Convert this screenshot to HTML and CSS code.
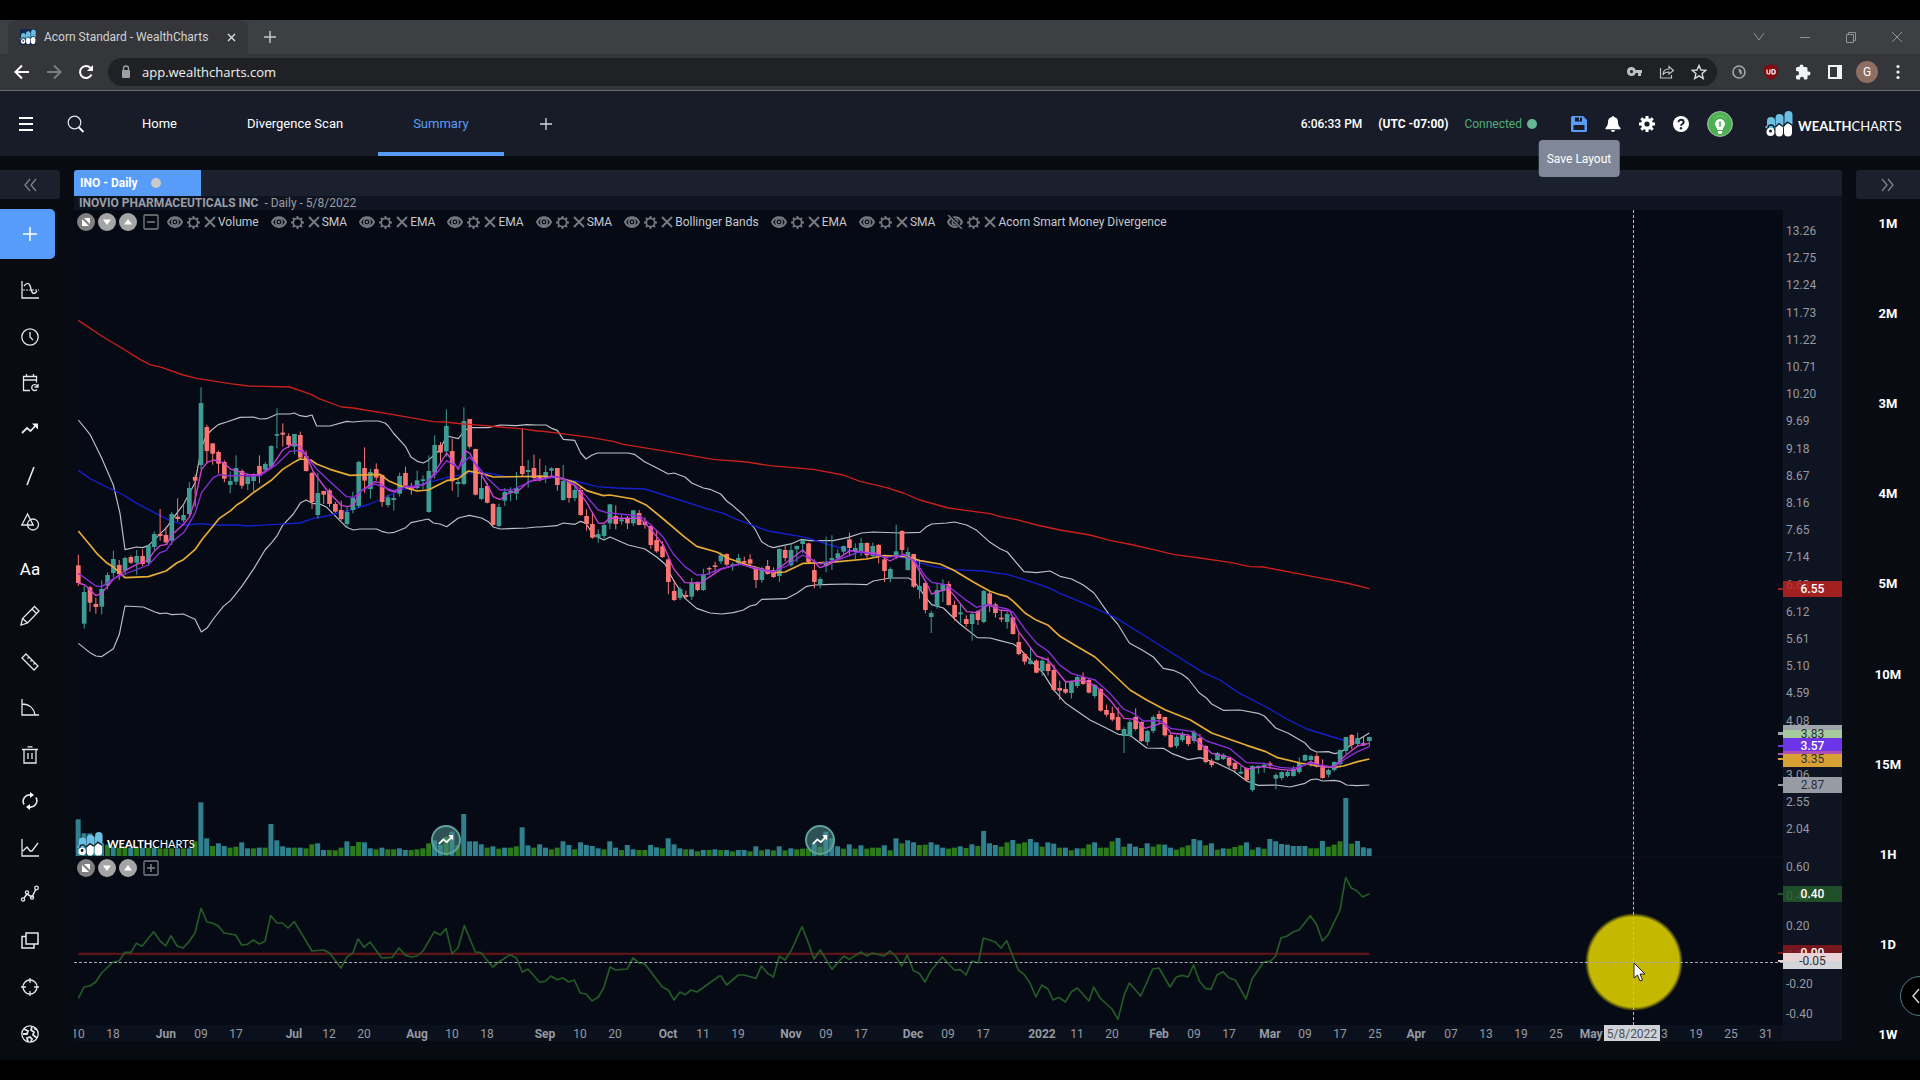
FILE: index.html
```html
<!DOCTYPE html>
<html lang="en">
<head>
<meta charset="utf-8">
<title>Acorn Standard - WealthCharts</title>
<link rel="stylesheet" href="styles.css">
</head>
<body>
<svg class="sprite" aria-hidden="true">
  <symbol id="logo" viewBox="0 0 28 26">
    <g fill="#6bbfe3"><rect x="2" y="6" width="8" height="13" rx="4"/><rect x="10.500" y="3" width="8" height="16" rx="4"/><rect x="19.500" y="0" width="8" height="16" rx="4"/><circle cx="1.500" cy="16" r="1.200"/></g>
    <g fill="#fff"><circle cx="5.500" cy="21" r="4"/><rect x="10.500" y="14" width="7.500" height="11.500" rx="3.700"/><rect x="19" y="13" width="8" height="12.500" rx="4"/></g>
    <path d="M3 17a3 3 0 0 1 6 0M10.500 16l3.500-3.500 4 3M18.500 15l4-4 4.500 3" fill="none" stroke="#10151f" stroke-width="1.300"/>
    <circle cx="5.500" cy="20" r="1.500" fill="#10151f"/>
  </symbol>
  <symbol id="eye" viewBox="0 0 16 14"><path d="M1 7c3-6.500 11-6.500 14 0-3 6.500-11 6.500-14 0z" fill="none" stroke="currentColor" stroke-width="2"/><circle cx="8" cy="7" r="3.200" fill="none" stroke="currentColor" stroke-width="1.500"/><circle cx="8" cy="7" r="1.200" fill="currentColor"/></symbol>
  <symbol id="eye-off" viewBox="0 0 16 14"><path d="M1 7c3-6.500 11-6.500 14 0-3 6.500-11 6.500-14 0z" fill="none" stroke="currentColor" stroke-width="2"/><circle cx="8" cy="7" r="2.800" fill="none" stroke="currentColor" stroke-width="1.500"/><path d="M2 0l13 14" stroke="#050a15" stroke-width="3"/><path d="M1 0l14 14" stroke="currentColor" stroke-width="1.500"/></symbol>
  <symbol id="cog" viewBox="0 0 14 14"><circle cx="7" cy="7" r="4.500" fill="none" stroke="currentColor" stroke-width="1.800"/><path d="M7 0v3M7 11v3M0 7h3M11 7h3M2 2l2 2M10 10l2 2M12 2l-2 2M4 10l-2 2" stroke="currentColor" stroke-width="2"/></symbol>
  <symbol id="cross" viewBox="0 0 12 12"><path d="M1 1l10 10M11 1L1 11" stroke="currentColor" stroke-width="2"/></symbol>
  <symbol id="trend" viewBox="0 0 18 12"><path d="M1 11l5-5 4 3 5.500-6" fill="none" stroke="currentColor" stroke-width="2"/><path d="M11.500 1H17v6z" fill="currentColor"/></symbol>
</svg>

<header class="browser">
  <div class="tabstrip">
    <div class="tab">
      <svg class="favicon"><use href="#logo"/></svg>
      <span class="tab-title">Acorn Standard - WealthCharts</span>
      <button class="icon-btn" aria-label="Close tab"><svg width="9" height="9" viewBox="0 0 9 9"><path d="M1 1l7 7M8 1L1 8" stroke="#dadce0" stroke-width="1.400"/></svg></button>
    </div>
    <button class="icon-btn new-tab" aria-label="New tab"><svg width="12" height="12" viewBox="0 0 12 12"><path d="M6 0v12M0 6h12" stroke="#c4c7ca" stroke-width="1.500"/></svg></button>
    <div class="window-controls">
      <button class="icon-btn" aria-label="Search tabs"><svg width="12" height="12" viewBox="0 0 12 12"><path d="M1 2l5 7 5-7" fill="none" stroke="#909396"/></svg></button>
      <button class="icon-btn" aria-label="Minimize"><svg width="12" height="12" viewBox="0 0 12 12"><path d="M1 6.500h10" stroke="#909396"/></svg></button>
      <button class="icon-btn" aria-label="Restore"><svg width="12" height="12" viewBox="0 0 12 12"><path d="M1.500 3.500h7v8h-7zM3.500 3V1.500h7v8H9" fill="none" stroke="#909396"/></svg></button>
      <button class="icon-btn" aria-label="Close window"><svg width="12" height="12" viewBox="0 0 12 12"><path d="M1 1l10 10M11 1L1 11" stroke="#909396"/></svg></button>
    </div>
  </div>
  <div class="toolbar">
    <button class="icon-btn nav-btn" aria-label="Back"><svg width="16" height="16" viewBox="0 0 16 16"><path d="M15 8H2M8 1.500L1.500 8 8 14.500" fill="none" stroke="#fff" stroke-width="2"/></svg></button>
    <button class="icon-btn nav-btn" aria-label="Forward"><svg width="16" height="16" viewBox="0 0 16 16"><path d="M1 8h13M8 1.500L14.500 8 8 14.500" fill="none" stroke="#7b7d80" stroke-width="2"/></svg></button>
    <button class="icon-btn nav-btn" aria-label="Reload"><svg width="16" height="16" viewBox="0 0 16 16"><path d="M13.500 10.500A6 6 0 1 1 12.500 4" fill="none" stroke="#fff" stroke-width="2"/><path d="M15 1v6H9z" fill="#fff"/></svg></button>
    <div class="omnibox">
      <svg width="10" height="14" viewBox="0 0 10 14"><rect x="1" y="5" width="8" height="8" rx="1" fill="#9aa0a6"/><path d="M2.500 5V3.500a2.500 2.500 0 0 1 5 0V5" fill="none" stroke="#9aa0a6" stroke-width="1.300"/></svg>
      <input class="url" type="text" value="app.wealthcharts.com" aria-label="Address">
      <button class="icon-btn" aria-label="Passwords"><svg width="16" height="10" viewBox="0 0 16 10"><path fill-rule="evenodd" fill="#bdc1c6" d="M4.500 0a4.500 4.500 0 1 0 4.300 6H11v3h3V6h1V3H8.700A4.500 4.500 0 0 0 4.500 0zm0 3a1.600 1.600 0 1 1 0 3.200 1.600 1.600 0 0 1 0-3.200z"/></svg></button>
      <button class="icon-btn" aria-label="Share"><svg width="16" height="14" viewBox="0 0 16 14"><path d="M1.500 3v10h11v-3M4 10c0-4 2-6 6-6V1.500L14.500 5.500 10 9V7C7 7 5 8 4 10z" fill="none" stroke="#bdc1c6" stroke-width="1.200"/></svg></button>
      <button class="icon-btn" aria-label="Bookmark"><svg width="16" height="16" viewBox="0 0 16 16"><path d="M8 1.500l2 4.500 4.700.4-3.600 3.200 1.100 4.800L8 11.800l-4.200 2.600 1.100-4.800L1.300 6.400 6 6z" fill="none" stroke="#dadce0" stroke-width="1.400"/></svg></button>
    </div>
    <div class="extensions">
      <button class="icon-btn" aria-label="Timer"><svg width="16" height="16" viewBox="0 0 16 16"><circle cx="8" cy="8" r="6" fill="none" stroke="#a4a6a9" stroke-width="1.600"/><path d="M7.500 4.500A4 4 0 0 1 10 11L8 8z" fill="#a4a6a9"/></svg></button>
      <button class="icon-btn shield" aria-label="uBlock"><svg width="16" height="16" viewBox="0 0 16 16"><path d="M8 0c2 1.500 4 2 7 2v5c0 4-3 7-7 9-4-2-7-5-7-9V2c3 0 5-.5 7-2z" fill="#800b0f"/><path d="M4 5.500v3a1.500 1.500 0 0 0 3 0v-3M9 5.500v4.500h1a2.200 2.200 0 0 0 0-4.500z" fill="none" stroke="#fff" stroke-width="1.200"/></svg></button>
      <button class="icon-btn" aria-label="Extensions"><svg width="16" height="16" viewBox="0 0 16 16"><path d="M13.500 7.500h-1V4.500A1.500 1.500 0 0 0 11 3H8.500V2.500a2 2 0 0 0-4 0V3H2.500A1.500 1.500 0 0 0 1 4.500V7h.8a2 2 0 0 1 0 4.500H1V14a1.500 1.500 0 0 0 1.500 1.500H5v-.8a2 2 0 0 1 4 0v.8h2a1.500 1.500 0 0 0 1.500-1.500v-2.500h1a2 2 0 0 0 0-4z" fill="#f1f3f4"/></svg></button>
      <button class="icon-btn" aria-label="Side panel"><svg width="16" height="16" viewBox="0 0 16 16"><path fill-rule="evenodd" fill="#f1f3f4" d="M1 1h14v14H1zM3 3v10h7V3z"/></svg></button>
      <button class="icon-btn profile" aria-label="Profile">G</button>
      <button class="icon-btn" aria-label="Menu"><svg width="4" height="16" viewBox="0 0 4 16"><g fill="#f1f3f4"><circle cx="2" cy="2.500" r="1.600"/><circle cx="2" cy="8" r="1.600"/><circle cx="2" cy="13.500" r="1.600"/></g></svg></button>
    </div>
  </div>
</header>

<nav class="app-header">
  <button class="icon-btn menu-btn" aria-label="Menu"><svg width="14" height="14" viewBox="0 0 14 14"><path d="M0 1h14M0 7h14M0 13h14" stroke="#fff" stroke-width="2"/></svg></button>
  <button class="icon-btn search-btn" aria-label="Search"><svg width="18" height="18" viewBox="0 0 18 18"><circle cx="7.500" cy="7.500" r="6.300" fill="none" stroke="#e6e8ec" stroke-width="1.200"/><path d="M12 12.500l4.500 4.500" stroke="#fff" stroke-width="1.800"/></svg></button>
  <a class="page-link" href="#home">Home</a>
  <a class="page-link" href="#divergence">Divergence Scan</a>
  <a class="page-link active" href="#summary">Summary</a>
  <button class="icon-btn add-page" aria-label="Add page"><svg width="12" height="12" viewBox="0 0 12 12"><path d="M6 0v12M0 6h12" stroke="#d5d8de" stroke-width="1.300"/></svg></button>
  <div class="status">
    <span class="clock">6:06:33 PM</span>
    <span class="zone">(UTC -07:00)</span>
    <span class="connected">Connected</span>
  </div>
  <div class="actions">
    <div class="save-wrap">
      <button class="icon-btn" aria-label="Save Layout" aria-describedby="save-tip"><svg width="16" height="16" viewBox="0 0 16 16"><path fill="#5b9cf8" fill-rule="evenodd" d="M1.500 0H12l4 4v10.500a1.500 1.500 0 0 1-1.500 1.500h-13A1.500 1.500 0 0 1 0 14.500v-13A1.500 1.500 0 0 1 1.500 0zM4 1.500v4h7v-4H9v3H8v-3zM2.500 9v5h11V9z"/></svg></button>
      <span class="tooltip" id="save-tip" role="tooltip">Save Layout</span>
    </div>
    <button class="icon-btn" aria-label="Alerts"><svg width="16" height="16" viewBox="0 0 16 16"><path fill="#fff" d="M8 0a1 1 0 0 1 1 1c3 .6 4 2.600 4 5 0 3 1 4.500 2.500 6v1.200H.5V12C2 10.500 3 9 3 6c0-2.400 1-4.400 4-5a1 1 0 0 1 1-1zM6 14h4a2 2 0 0 1-4 0z"/></svg></button>
    <button class="icon-btn" aria-label="Settings"><svg width="16" height="16" viewBox="0 0 16 16"><circle cx="8" cy="8" r="4.300" fill="none" stroke="#fff" stroke-width="3.400"/><path d="M8 0v3M8 13v3M0 8h3M13 8h3M2.300 2.300l2 2M11.700 11.700l2 2M13.700 2.300l-2 2M4.300 11.700l-2 2" stroke="#fff" stroke-width="3"/></svg></button>
    <button class="icon-btn" aria-label="Help"><svg width="16" height="16" viewBox="0 0 16 16"><circle cx="8" cy="8" r="8" fill="#fff"/><path d="M5.500 6.200c0-3.300 5.200-3.200 5.200 0 0 1.900-2.700 1.700-2.700 3.600" fill="none" stroke="#171c28" stroke-width="1.900"/><circle cx="8" cy="12.200" r="1.200" fill="#171c28"/></svg></button>
    <button class="icon-btn" aria-label="Account"><svg width="26" height="26" viewBox="0 0 26 26"><circle cx="13" cy="13" r="12.500" fill="#4caf50" stroke="#e8f5e9" stroke-width=".6"/><path d="M13 8a5 5 0 0 1 5 5c0 2-2 3-2.300 6h-5.400C10 16 8 15 8 13a5 5 0 0 1 5-5zM10.800 20h4.400v2l-2.200 1.500L10.800 22z" fill="#fff"/><path d="M14.300 11.500c-2.600-1-3.200 1-1.300 1.500s1.500 2.300-1.300 1.500M13 10.500v5.300" stroke="#4caf50" fill="none"/><path d="M7 6.500l1 1M10 4.500l.5 1.500M13 4v1.500M16 4.500L15.500 6M19 6.500l-1 1" stroke="#fff" stroke-width=".6"/></svg></button>
  </div>
  <a class="brand" href="#brand"><svg width="28" height="26"><use href="#logo"/></svg><span><b>WEALTH</b>CHARTS</span></a>
</nav>

<main class="workspace">
  <aside class="tools">
    <button class="collapse" aria-label="Collapse tools"><svg width="14" height="14" viewBox="0 0 14 14"><path d="M7 1L2 7l5 6M13 1L8 7l5 6" fill="none" stroke="#7c828f" stroke-width="1.300"/></svg></button>
    <button class="add-chart" aria-label="Add chart"><svg width="16" height="16" viewBox="0 0 16 16"><path d="M8 1v14M1 8h14" stroke="#fff" stroke-width="1.500"/></svg></button>
    <div class="tool-list">
      <button aria-label="Indicators"><svg viewBox="0 0 18 18"><path d="M1 0v17h17"/><path d="M2 9h16" stroke-width="1" stroke-dasharray="2 1"/><path d="M3 5c4-5 6-2 7 3s3 6 6 2"/></svg></button>
      <button aria-label="Time frame"><svg viewBox="0 0 18 18"><circle cx="9" cy="9" r="8.200"/><path d="M9 4v5l3 3"/></svg></button>
      <button aria-label="Calendar"><svg viewBox="0 0 18 18"><path d="M9 16.500H2.500v-14h13v6M2.500 6h13M5.500 0v3M12.500 0v3M17 10v3h-3.500M16.500 12.500a3 3 0 1 0-.5 3"/></svg></button>
      <button aria-label="Trend"><svg viewBox="0 0 18 18"><path d="M1 12l5-5 3.500 3 6-6.500" stroke-width="1.800"/><path d="M11 2.500h6v6z" fill="#fff" stroke="none"/></svg></button>
      <button aria-label="Line"><svg viewBox="0 0 18 18"><path d="M13 0L6 18" stroke-width="1.600"/></svg></button>
      <button aria-label="Shapes"><svg viewBox="0 0 18 18"><path d="M6.500 0L.8 11h11.400z"/><circle cx="12" cy="10.500" r="5.500"/></svg></button>
      <button class="text-tool" aria-label="Text">Aa</button>
      <button aria-label="Pencil"><svg viewBox="0 0 18 18"><path d="M0 18l1.500-6.500L13.500 -.5l4.500 4.500L6.500 16zM11 2l4.500 4.500M1.500 11.500l5 4.500"/></svg></button>
      <button aria-label="Ruler"><svg viewBox="0 0 18 18"><path d="M1 5l4-4 12 12-4 4zM8 4L6.500 5.500M11 7L9.500 8.500M14 10l-1.500 1.500"/></svg></button>
      <button aria-label="Fibonacci arc"><svg viewBox="0 0 18 18"><path d="M1 0v16h17M1 5c7 0 12 4 13 11"/></svg></button>
      <button aria-label="Delete"><svg viewBox="0 0 18 18"><path d="M1 3.500h16M3 3.500v13.500h12V3.500M6.500 .8h5M7 7v6M11 7v6"/></svg></button>
      <button aria-label="Refresh"><svg viewBox="0 0 18 18"><path d="M3 12.500A6.500 6.500 0 0 1 10 3M15 5.500a6.500 6.500 0 0 1-7 9.500" stroke-width="1.600"/><path d="M9 0l4 3-4 3zM9 12l-4 3 4 3z" fill="#fff" stroke="none"/></svg></button>
      <button aria-label="Study"><svg viewBox="0 0 18 18"><path d="M1 0v17h17M2 12l4-4 3 4 2 0 6-8"/></svg></button>
      <button aria-label="Pattern"><svg viewBox="0 0 18 18"><path d="M3 13l3-4 5 3 4-8" stroke-width="1.500"/><circle cx="2" cy="14.500" r="1.600"/><circle cx="6" cy="7.500" r="1.600"/><circle cx="11" cy="12.500" r="1.600"/><circle cx="15.500" cy="3" r="1.800"/></svg></button>
      <button aria-label="Duplicate"><svg viewBox="0 0 18 18"><path d="M5 1h12v11H5zM5 4.500H1V16h12v-4" stroke-width="1.500"/></svg></button>
      <button aria-label="Crosshair"><svg viewBox="0 0 18 18"><circle cx="9" cy="9" r="7"/><path d="M9 0v5M9 13v5M0 9h5M13 9h5"/></svg></button>
      <button aria-label="World"><svg viewBox="0 0 18 18"><circle cx="9" cy="9" r="8.200"/><path d="M3 4l4 2-1 3-4 0M7 17l-1-4 3-1 2 2-1 3M11 1.500L10 5l3 2-1 3 4 3M13 3l3 2" stroke-width="1.800"/></svg></button>
    </div>
  </aside>

  <section class="panel">
    <div class="panel-tabs"><button class="panel-tab">INO - Daily<span class="dot"></span></button></div>
    <h1 class="symbol"><b>INOVIO PHARMACEUTICALS INC</b>&nbsp; - Daily - 5/8/2022</h1>
    <div class="chart">
      <div class="plot" id="plot">
        <svg class="canvas" id="canvas" viewBox="42 -270 5127 2445" preserveAspectRatio="none"></svg>
        <div class="spotlight"></div>
        <div class="crosshair-x"></div>
        <div class="crosshair-y"></div>
        <div class="legend" id="legend">
          <button class="round dim" aria-label="Maximize pane"><svg viewBox="0 0 18 18"><path d="M5 6v7h7zM7 5h6v6z" fill="#fff"/></svg></button>
          <button class="round" aria-label="Move pane down"><svg viewBox="0 0 18 18"><path d="M5 6.500h8L9 12z" fill="#fff"/></svg></button>
          <button class="round" aria-label="Move pane up"><svg viewBox="0 0 18 18"><path d="M5 11.500h8L9 6z" fill="#fff"/></svg></button>
          <button class="square" aria-label="Collapse legend"><svg viewBox="0 0 16 16"><rect x="1" y="1" width="14" height="14" rx="1" fill="none" stroke="#7d8087" stroke-width="1.300"/><path d="M4 8h8" stroke="#7d8087" stroke-width="1.500"/></svg></button>
        </div>
        <div class="legend lower">
          <button class="round dim" aria-label="Maximize pane"><svg viewBox="0 0 18 18"><path d="M5 6v7h7zM7 5h6v6z" fill="#fff"/></svg></button>
          <button class="round" aria-label="Move pane down"><svg viewBox="0 0 18 18"><path d="M5 6.500h8L9 12z" fill="#fff"/></svg></button>
          <button class="round" aria-label="Move pane up"><svg viewBox="0 0 18 18"><path d="M5 11.500h8L9 6z" fill="#fff"/></svg></button>
          <button class="square" aria-label="Expand legend"><svg viewBox="0 0 16 16"><rect x="1" y="1" width="14" height="14" rx="1" fill="none" stroke="#7d8087" stroke-width="1.300"/><path d="M4 8h8M8 4v8" stroke="#7d8087" stroke-width="1.500"/></svg></button>
        </div>
        <div class="watermark"><svg width="26" height="26"><use href="#logo"/></svg><span><b>WEALTH</b>CHARTS</span></div>
        <svg class="pointer" viewBox="0 0 14 20"><path d="M1 1v15l3.500-3 2.500 6 2.500-1-2.500-6H12z" fill="#fff" stroke="#222"/></svg>
      </div>
      <div class="price-axis" id="prices"></div>
      <div class="time-axis" id="times"></div>
    </div>
  </section>

  <aside class="frames">
    <button class="collapse" aria-label="Collapse intervals"><svg width="14" height="14" viewBox="0 0 14 14"><path d="M1 1l5 6-5 6M7 1l5 6-5 6" fill="none" stroke="#7c828f" stroke-width="1.300"/></svg></button>
    <div class="frame-list">
      <button>1M</button><button>2M</button><button>3M</button><button>4M</button><button>5M</button><button>10M</button><button>15M</button><button>1H</button><button>1D</button><button>1W</button>
    </div>
    <button class="drawer" aria-label="Open drawer"><svg width="10" height="16" viewBox="0 0 10 16"><path d="M8 1L2 8l6 7" fill="none" stroke="#cfd2d8" stroke-width="1.500"/></svg></button>
  </aside>
</main>
<script src="chart.js"></script>
</body>
</html>
```

FILE: styles.css
```css
* { box-sizing: border-box; }
body {
  margin: 0;
  min-height: 100vh;
  padding: 20px 0;
  display: flex;
  flex-direction: column;
  background: #000;
  color: #fff;
  font: 13px/16px Roboto, sans-serif;
  overflow-x: hidden;
}
button {
  margin: 0; padding: 0; border: 0;
  background: none; color: inherit;
  font: inherit; cursor: pointer;
}
svg { display: block; }
.sprite { position: absolute; width: 0; height: 0; }
.icon-btn { display: flex; align-items: center; justify-content: center; flex: none; }

/* Browser frame */
.tabstrip { display: flex; align-items: center; height: 34px; padding-left: 8px; background: #3c4043; }
.tab { display: flex; align-items: center; width: 240px; height: 34px; padding: 0 12px; background: #35363a; border-radius: 8px 8px 0 0; }
.favicon { width: 16px; height: 16px; background: #12284a; }
.tab-title { flex: 1; margin-left: 8px; color: #d0d2d5; font-size: 12px; white-space: nowrap; }
.new-tab { margin-left: 16px; }
.window-controls { display: flex; gap: 34px; margin-left: auto; padding-right: 17px; }
.toolbar { display: flex; align-items: center; height: 37px; background: #35363a; border-bottom: 1px solid #6a6c70; }
.nav-btn { width: 32px; }
.nav-btn:first-child { margin-left: 6px; }
.omnibox { display: flex; align-items: center; gap: 16px; flex: 1; height: 28px; margin-left: 6px; padding: 0 10px 0 13px; background: #202124; border-radius: 14px; }
.url { flex: 1; min-width: 0; margin-left: -5px; padding: 0; border: 0; outline: 0; background: none; color: #f1f3f4; font: 13px/20px "Open Sans", sans-serif; }
.extensions { display: flex; align-items: center; gap: 16px; padding: 0 20px 0 14px; }
.profile { width: 22px; height: 22px; margin: 0 2px 0 -3px; border-radius: 50%; background: #8d6e63; font-size: 12px; }

/* Application header */
.app-header { display: flex; align-items: center; height: 65px; background: #171c28; }
.menu-btn { width: 52px; height: 40px; }
.search-btn { width: 48px; height: 40px; }
.page-link { display: flex; align-items: center; height: 65px; padding: 4px 35px 0; border-bottom: 4px solid transparent; color: #fff; text-decoration: none; }
.search-btn + .page-link { margin-left: 7px; }
.page-link.active { color: #5b9cf8; border-bottom-color: #579cf8; }
.add-page { width: 84px; height: 40px; }
.status { display: flex; align-items: center; gap: 16px; margin-left: auto; font-size: 12px; }
.clock { font-weight: 500; }
.zone { font-weight: 700; }
.connected { display: flex; align-items: center; gap: 5px; color: #4fae79; }
.connected::after { content: ""; width: 10px; height: 10px; border-radius: 50%; background: #67b695; }
.actions { display: flex; align-items: center; gap: 18px; margin-left: 34px; }
.save-wrap { position: relative; }
.tooltip { position: absolute; z-index: 3; top: 24px; left: 50%; transform: translateX(-50%); padding: 11px 8px 10px; border-radius: 4px; background: #7f8798; font-size: 12px; white-space: nowrap; }
.brand { display: flex; align-items: center; gap: 5px; width: 155px; margin-left: 32px; color: #fff; text-decoration: none; font: 13px/16px Lato, sans-serif; white-space: nowrap; }
.brand span { padding-top: 4px; }

/* Workspace */
.workspace { display: flex; flex: 1; padding-top: 14px; overflow: hidden; background: #080b12; }
.tools { display: flex; flex-direction: column; width: 60px; margin-right: 14px; }
.collapse { display: flex; align-items: center; justify-content: center; height: 29px; border-radius: 0 3px 3px 0; background: #1b202c; }
.add-chart { display: flex; align-items: center; justify-content: center; width: 55px; height: 50px; margin-top: 10px; padding-left: 4px; border-radius: 0 5px 5px 0; background: #579cf8; }
.tool-list { display: flex; flex-direction: column; flex: 1; padding: 8px 0 3px; }
.tool-list button { display: flex; align-items: center; justify-content: center; flex: 1; }
.tool-list svg { width: 18px; height: 18px; fill: none; stroke: #e4e7ea; stroke-width: 1.3; overflow: visible; }
.tool-list .text-tool { font-size: 17px; }

.panel { display: flex; flex-direction: column; flex: 1; min-width: 0; margin-bottom: 19px; background: #0e1421; }
.panel-tabs { height: 26px; background: #1a202d; border-radius: 3px 3px 0 0; }
.panel-tab { display: flex; align-items: center; gap: 13px; width: 127px; height: 26px; padding-left: 6px; border-radius: 3px 0 0 0; background: #579cf8; font-weight: 700; font-size: 12px; }
.dot { width: 10px; height: 10px; border-radius: 50%; background: #c9c9c9; }
.symbol { margin: 0; height: 14px; padding-left: 5px; color: #9b9ea5; font-size: 12px; font-weight: 400; line-height: 14px; }
.chart { display: grid; grid-template: 1fr 16px / 1fr 59px; flex: 1; }
.plot { position: relative; min-width: 0; overflow: hidden; background: #050a15; }
.canvas { position: absolute; inset: 0; width: 100%; height: 100%; }
.canvas polyline { fill: none; stroke-linejoin: round; }

.legend { position: absolute; top: 3px; left: 3px; display: flex; align-items: center; height: 18px; color: #777a80; font-size: 12px; }
.legend.lower { top: 80.7%; margin-top: -9px; }
.round { width: 18px; height: 18px; margin-right: 3px; border-radius: 50%; background: #a5a5a5; }
.round.dim { background: #808080; }
.square { width: 16px; height: 16px; margin: 0 8px 0 3px; }
.study { display: flex; align-items: center; gap: 4px; margin-right: 12px; white-space: nowrap; }
.study span { margin-left: -2px; color: #c5c8ce; }
.study .i-eye { width: 16px; height: 14px; }
.study .i-cog { width: 13px; height: 13px; }
.study .i-cross { width: 12px; height: 12px; }

.watermark { position: absolute; bottom: 168px; left: 3px; display: flex; align-items: center; gap: 4px; font: 11px/16px Lato, sans-serif; white-space: nowrap; }
.event { position: absolute; top: 77.3%; display: flex; align-items: center; justify-content: center; width: 30px; height: 30px; margin: -15px 0 0 -15px; border: 2px solid #5fa29d; border-radius: 50%; background: rgba(78, 140, 138, .55); }
.event svg { width: 16px; height: 11px; }
.spotlight { position: absolute; left: 91.3%; top: 92.3%; width: 98px; height: 98px; margin: -49px 0 0 -49px; border-radius: 50%; background: radial-gradient(circle, #c4b800 45px, rgba(196, 184, 0, 0) 49px); }
.crosshair-x { position: absolute; left: 0; right: 0; top: 92.3%; border-top: 1px dashed #a6aab2; }
.crosshair-y { position: absolute; top: 0; bottom: 0; left: 91.2%; border-left: 1px dashed #b8bbc2; }
.pointer { position: absolute; left: 91.2%; top: 92.3%; width: 14px; height: 20px; }

.price-axis, .time-axis { position: relative; color: #969aa3; font-size: 12px; }
.time-axis { overflow: hidden; background: #0b111c; }
.price-axis .label { position: absolute; left: 3px; line-height: 16px; margin-top: -7px; }
.time-axis .label { position: absolute; top: 1px; transform: translateX(-50%); }
.time-axis .label.month { font-weight: 700; }
.tag { position: absolute; left: 0; right: 0; height: 16px; margin-top: -8px; text-align: center; line-height: 17px; color: #fff; font-weight: 500; }
.tag::before { content: ""; position: absolute; left: -5px; top: 7px; width: 5px; height: 2px; background: inherit; }
.tag.dark { color: #2c3038; font-weight: 400; }
.date-tag { position: absolute; top: 0; width: 56px; height: 16px; margin-left: -28px; background: #cfd2d7; color: #4c5058; font-size: 12px; line-height: 18px; text-align: center; }

.frames { position: relative; display: flex; flex-direction: column; width: 64px; margin-left: 14px; }
.frames .collapse { border-radius: 3px 0 0 3px; }
.frame-list { display: flex; flex-direction: column; justify-content: space-between; flex: 1; padding: 16px 0 16px; font-weight: 700; }
.frame-list button { height: 18px; }
.drawer { position: absolute; right: -20px; bottom: 44px; display: flex; align-items: center; width: 40px; height: 40px; padding-left: 10px; border: 1px solid #4d7f85; border-radius: 50%; background: #000; }
```

FILE: chart.js
```js
const NS = 'http://www.w3.org/2000/svg';
const STEP = 17.525;
const canvas = document.getElementById('canvas');

function draw(tag, attrs) {
  const el = document.createElementNS(NS, tag);
  for (const key in attrs) el.setAttribute(key, attrs[key]);
  canvas.appendChild(el);
}

// Shift a "x,y x,y" list by an origin and scale its x values.
function seg(ox, oy, points, sx = 1) {
  return points.trim().split(/\s+/).map(p => {
    const [x, y] = p.split(',').map(Number);
    return (ox + x * sx).toFixed(0) + ',' + (oy + y);
  }).join(' ') + ' ';
}

// Series of the price pane, in three consecutive date ranges.
function series(color, width, a, b, c) {
  const points = seg(0, 0, a) + seg(1440, 240, b) + seg(2820, 540, c);
  draw('polyline', { points, stroke: color, 'stroke-width': width });
}

// Volume: bar height and kind (t = teal, g = green).
const volume = `110t 68t 68t 58t 38t 34g 28t 25g 25g 25t 25g 25t 25g 25t 23g 23g 23g 23t 23g 23t 44g 161t 53t 30g 38t 30t 25g 28g 41t 23t 23g 25t 25g 96t 47t 29t 25t 25g 25t 23g 35g 38t 18t 18g 17g 25g 44t 30g 42g 41t 23t 20g 25t 20g 20g 23t 18t 18g 20g 23g 38g 47t 33t 58g 73t 33g 126t 44t 44t 35t 25g 29t 22g 25t 25g 29g 86t 32t 25g 35t 25t 20g 25g 44t 33t 20g 41t 33t 30t 23t 20g 44t 25t 18g 33t 20t 18g 18g 33t 26t 23g 53t 35t 23t 20g 20t 14g 18t 18g 20t 18g 18t 14g 18t 18t 14g 29t 17g 20t 17g 29t 17g 23t 20g 22g 23g 38t 28g 73t 53t 29t 22g 35t 22g 32t 22g 25g 25g 32t 17g 53t 38g 47t 41t 33g 34g 41t 34t 25t 22g 25g 29t 24g 35t 30g 75t 38t 29g`.split(' ');
const recent = `33t 28g 41g 48t 37g 41g 51t 41t 28g 41t 37t 25g 25t 17g 23t 23g 35g 41t 25g 25g 44g 54t 28g 37t 28t 24g 38t 28g 35g 34t 25t 19g 26g 32g 51t 47t 32g 38t 19g 23t 22g 27g 32g 41t 19g 26t 22g 51t 44t 36t 34t 30t 30t 30t 23g 23g 45t 28g 34g 44g 174t 37g 45t 26t 23t`.split(' ');
const bars = volume.slice(0, 222 - recent.length).concat(recent);
bars.forEach((b, i) => {
  const h = parseInt(b, 10);
  draw('rect', { x: 47 + STEP * i, y: 1668 - h, width: 15, height: h, fill: b.endsWith('t') ? '#30808f' : '#2c7a1c' });
});
draw('rect', { x: 42, y: 1670, width: 5127, height: 3, fill: '#0d1522' });

series('#bdc0c8', 3.5,
  '55,360 90,403 125,474 160,555 180,640 195,749 230,741 248,743 266,736 320,682 350,640 370,614 405,548 425,440 440,405 455,390 475,374 500,366 540,352 580,351 600,357 620,356 652,342 690,342 703,339 720,347 738,350 756,345 770,378 810,378 860,364 880,366 910,363 955,363 975,369 985,378 1000,399 1037,440 1053,471 1072,484 1090,489 1105,481 1140,448 1160,408 1195,416 1215,390 1235,383 1285,383 1320,375 1370,377 1400,374 1430,375',
  '0,135 18,135 35,145 52,151 70,178 104,181 122,219 138,237 155,226 172,219 265,219 283,223 315,246 345,261 385,282 402,279 435,291 455,309 490,324 510,328 542,342 560,363 575,374 610,405 645,447 665,485 685,498 700,503 755,491 785,478 810,482 880,482 925,472 965,459 1000,456 1080,459 1140,457 1157,442 1175,432 1220,429 1243,426 1280,435 1310,451 1350,487',
  '0,206 22,216 72,275 110,278 150,273 180,289 215,297 250,315 282,339 325,400 353,432 388,489 425,509 460,531 490,565 520,571 545,582 565,597 598,639 618,653 635,672 670,691 720,690 775,700 793,708 827,744 865,760 915,789 932,808 950,816 985,815 1003,821 1020,818 1060,790 1080,776 1108,759');
series('#bdc0c8', 3.5,
  '55,1030 90,1058 108,1068 124,1070 160,1046 178,1003 195,918 250,921 285,936 300,941 318,939 335,944 370,942 405,958 424,996 442,983 460,957 490,919 512,901 547,857 582,805 615,750 635,728 652,706 668,676 700,642 722,608 738,600 760,611 778,611 800,622 830,652 860,682 880,690 900,687 950,687 965,694 985,699 1003,697 1037,683 1053,668 1105,657 1120,669 1140,672 1160,680 1195,654 1228,646 1265,654 1285,665 1300,681 1320,687 1400,684 1430,681',
  '0,441 50,437 70,429 105,433 122,424 138,430 160,465 192,480 210,471 265,495 315,507 350,531 375,552 400,600 435,655 470,685 510,699 545,702 580,698 610,690 630,678 648,674 665,658 738,656 770,640 800,619 825,615 870,613 920,612 980,614 1000,603 1050,594 1105,594 1122,603 1157,652 1175,674 1210,684 1260,732 1312,773 1350,774',
  '0,482 40,492 56,503 90,540 130,580 160,628 197,670 232,694 270,720 320,745 355,763 390,766 440,804 490,805 515,820 565,839 600,833 650,849 700,873 740,903 775,916 828,915 870,921 915,910 932,899 950,897 968,903 1003,901 1020,904 1040,915 1070,917 1108,915');
series('#161fd0', 4,
  '55,511 90,536 140,561 160,570 190,585 230,610 330,662 375,675 425,671 460,675 530,675 560,678 650,673 720,669 760,655 800,648 865,632 930,612 985,588 1010,575 1070,557 1160,533 1240,517 1290,520 1340,531 1430,528',
  '0,290 60,295 105,303 172,320 230,324 315,327 400,354 500,386 550,400 590,418 640,437 685,453 800,473 870,495 940,515 1010,525 1100,534 1140,548 1180,560 1240,569 1330,573',
  '0,281 22,283 90,304 145,323 180,340 260,373 345,412 440,471 540,534 610,578 660,600 715,638 810,687 860,717 920,747 1038,783 1090,790');

// Candles: high, body top, body bottom, low; the first letter is the direction.
const candles = [
  [0, 'r764 796 849 858|g858 876 971 986|r858 862 908 935|r893 912 921 941|g841 867 920 943|g817 825 857 868|g752 777 819 832|r780 795 822 840|g770 774 812 824|r766 771 788 792|g750 768 788 824|r748 768 792 798|g734 736 788 798|g694 702 741 750|r627 702 708 722|r680 705 727 731|g636 642 722 735|r595 650 657 665|g618 645 661 667|g546 564 642 648|r524 531 542 620|g262 309 495 508|r374 381 453 490|r430 430 461 494|r452 456 491 520|r481 486 536 547|g515 543 555 580|g466 504 545 555|r508 513 557 566|g520 531 552 570|g520 522 543 574|r466 498 528 550|g486 492 509 520|g436 438 500 508|g325 402 407 445|r370 398 404 440|r400 408 435 444|g402 402 440 462|r395 405 473 480|r452 468 513 515|r516 519 606 627|g519 579 645 656|r572 573 584 612|r566 571 612 620|r606 612 635 638|r602 630 657 662|g618 636 672 683|g575 594 630 640|g482 486 618 624|r442 504 542 578|g506 516 567 596|r490 507 533 542|r523 525 606 620|g584 592 615 622|g582 594 600 632|g518 528 581 590|r500 519 557 560|r548 564 570 584|g512 541 564 571|g526 538 543 568|g466 513 636 638|g406 435 518 536|r426 435 458 486|g328 378 454 470|r416 453 544 572|g540 546 552 591|g322 363 552 556|r357 357 440 446|r446 447 584 586|g528 564 597 601|r548 558 608 610|r609 612 675 676|g612 621 678 682|g564 576 602 618|g562 572 578 604|g516 564 581 600|r384 498 522 528|g480 510 516 563|r464 504 534 540|r476 531 537 544'],
  [240, 'g257 276 294 309|g262 265 272 288|r264 264 315 332|g255 303 360 362|r303 306 354 368|g312 330 354 364|r318 330 405 408|r388 408 432 452|r398 432 473 476|g448 462 472 488|g432 435 468 480|g372 373 430 447|r376 408 432 448|g402 418 424 434|r408 413 430 447|g390 391 430 438|r390 399 435 436|r412 426 435 446|r436 438 495 506|r450 480 514 518|r484 499 531 534|r536 538 606 643|r600 633 660 663|g620 627 654 660|r632 645 651 656|g594 609 650 660|r604 606 630 634|g566 585 630 633|r560 564 568 585|r545 556 561 580|g517 526 544 552|r520 522 554 558|g548 553 558 572|g522 534 549 556|r530 543 548 558|r523 538 551 558|r560 564 600 624|g560 564 600 608|r540 558 582 584|r562 570 591 594|g505 507 588 606|r498 510 534 544|g490 510 556 560|g496 498 508 546|g478 480 492 520|r488 490 547 552|r538 570 606 625|g592 597 612 625|g470 546 558 577|g466 534 541 570|g508 520 535 542|g497 498 515 522|r458 478 504 526|g490 504 514 538|g474 489 514 528|r487 489 526 535|g488 498 528 534|r492 495 530 550|r528 538 573 606|g562 567 594 607|g434 514 525 538|r450 453 510 522|g502 516 570 572|r521 522 620 624|g542 618 630 656|r604 609 690 700|g692 699 711 759|g610 630 679 686|g598 612 633 666|r604 612 675 677|r662 675 711 722|g672 697 703 730|r706 717 732 740|g695 702 732 782|r690 693 720 735|g630 633 726 730|r636 640 678 696|r668 673 699 713|r690 713 718 726|g696 702 726 746|r710 712 762 764|r758 786 822 826'],
  [540, 'r518 522 545 554|g504 542 552 554|r538 542 578 580|g532 542 573 588|r532 551 573 586|r554 570 630 634|r602 624 632 660|r602 627 638 642|g602 605 639 656|g586 591 618 624|r577 591 612 614|r594 600 638 640|g612 615 648 654|r625 627 692 695|r674 690 704 710|r680 699 719 724|r682 711 750 752|g742 747 768 819|g720 726 768 772|r685 711 747 752|r724 726 783 786|g750 753 786 797|g706 711 753 760|r692 702 717 732|r710 711 766 770|r762 765 801 804|g766 771 798 804|g756 765 780 786|r764 768 792 798|g750 756 783 790|r762 774 810 812|r796 798 846 850|r836 842 855 862|g816 819 840 842|g820 824 837 840|r832 834 857 866|r846 849 867 876|g858 875 881 883|r862 864 900 904|g856 858 930 935|g856 858 864 882|g848 854 862 878|r844 850 857 867|g880 885 896 928|g874 876 894 900|g870 876 888 892|g858 867 888 890|g832 849 876 882|g823 825 842 845|g824 828 840 860|r820 828 860 862|r838 857 894 896|g866 870 884 892|g844 846 870 875|g808 810 852 862|g770 771 813 822|r762 765 795 808|g758 774 792 798|r770 790 796 798|g770 771 783 800']
];
let index = 0;
for (const [oy, rows] of candles) {
  for (const row of rows.split('|')) {
    const fill = row[0] === 'g' ? '#3f9c95' : '#fa7573';
    const [high, bodyTop, bodyEnd, low] = row.slice(1).split(' ').map(v => +v + oy);
    const x = 55 + STEP * index++;
    draw('rect', { x: x - 1.5, y: high, width: 3, height: low - high, fill });
    draw('rect', { x: x - 7, y: bodyTop, width: 14, height: Math.max(bodyEnd - bodyTop, 3), fill });
  }
}

series('#e8ac34', 5,
  '55,693 90,735 110,760 142,790 160,801 195,833 265,830 318,813 350,789 370,779 405,749 425,720 477,656 512,632 530,615 548,604 580,578 635,540 668,508 705,485 720,477 752,480 770,492 810,508 870,526 960,523 985,542 1020,557 1070,573 1105,570 1160,542 1195,536 1225,513 1265,520 1300,531 1430,529',
  '0,288 50,292 105,307 140,332 190,347 210,345 280,357 320,376 370,417 435,472 470,499 530,516 570,537 640,560 700,578 735,576 790,550 870,547 980,537 1030,527 1100,530 1140,542 1200,552 1240,570 1300,606 1350,634',
  '0,344 22,350 40,364 75,399 110,421 145,436 180,469 230,499 285,531 390,630 440,660 495,689 570,719 635,759 740,796 795,814 830,832 900,849 950,857 1003,862 1030,858 1073,845 1108,837');
series('#d23fd6', 4,
  '55,849 75,855 108,887 125,880 160,838 195,812 230,793 265,780 284,752 300,737 320,733 335,705 372,671 389,650 405,600 425,507 442,487 460,480 477,483 495,492 512,508 530,512 565,524 600,524 635,500 668,450 703,430 720,440 738,465 760,515 800,570 845,617 865,620 882,612 900,575 945,545 960,548 985,570 1005,576 1037,558 1060,564 1090,552 1105,545 1125,515 1160,459 1178,483 1195,508 1215,452 1230,460 1250,500 1285,560 1300,590 1320,599 1345,580 1375,572 1405,545 1430,540',
  '0,300 35,288 70,295 105,318 140,368 175,429 192,430 210,414 265,415 300,415 330,445 370,495 400,565 435,608 480,609 510,590 545,567 600,551 640,565 700,578 740,547 788,510 810,533 840,563 870,552 930,512 1010,520 1050,543 1090,522 1122,545 1157,605 1175,642 1225,625 1280,695 1310,698 1345,675',
  '0,390 30,393 56,455 110,528 144,540 197,606 250,600 290,620 330,660 372,715 407,718 435,745 490,728 512,759 565,765 600,790 635,820 690,832 740,867 790,860 840,868 880,872 932,845 968,862 1003,858 1038,825 1073,798 1108,790');
series('#8a30d8', 4,
  '55,820 108,858 125,860 160,836 195,822 265,795 300,758 318,752 337,725 372,697 405,640 425,577 460,533 477,524 512,528 545,526 565,528 600,527 650,493 690,454 720,451 738,468 770,507 810,545 860,590 882,592 900,575 945,552 1000,572 1040,560 1090,555 1125,525 1160,482 1195,503 1228,471 1250,495 1285,538 1320,570 1355,570 1405,548 1430,535',
  '0,298 50,290 105,313 140,350 175,390 200,398 300,408 330,432 370,472 400,522 435,560 470,585 500,583 545,565 600,553 700,575 740,558 788,525 840,552 900,537 960,515 1040,532 1090,525 1122,540 1157,590 1175,607 1220,615 1280,662 1310,682 1345,673',
  '0,382 22,387 40,398 75,448 110,490 144,513 180,556 214,580 285,600 330,640 370,687 400,700 430,723 480,722 512,745 580,755 620,783 690,806 740,848 790,850 840,862 880,865 932,850 1003,862 1038,835 1073,815 1108,800');
series('#cb201c', 4,
  '55,61 125,108 190,147 240,178 270,194 305,202 370,225 410,235 510,251 565,258 690,261 755,284 775,295 845,321 880,324 1000,344 1120,365 1155,366 1210,372 1240,374 1320,381 1400,388 1430,393',
  '0,153 60,160 150,172 220,184 250,193 380,214 520,238 620,246 690,257 820,268 910,285 960,304 1040,323 1090,339 1140,360 1225,384 1350,401',
  '0,110 50,119 110,135 180,150 270,165 330,181 400,195 470,211 520,223 600,234 690,247 750,260 790,261 940,290 1040,309 1108,326');

// Divergence pane: zero line and oscillator.
draw('rect', { x: 55, y: 1958, width: 3873, height: 7, fill: '#5d1416' });
draw('polyline', {
  stroke: '#245b26', 'stroke-width': 5,
  points: seg(0, 1440, '42,655 55,621 69,618 82,606 96,579 122,546 136,543 150,517 164,517 176,490 189,499 216,455 230,481 244,498 256,467 270,498 284,504 298,484 311,459 325,385 339,426 351,429 365,438 378,459 405,465 419,495 432,493 446,480 460,492 473,484 486,407 500,429 513,429 526,444 540,425 581,513 608,510 622,519 648,564 662,531 676,518 687,476 701,502 715,486 742,534 766,532 782,504 797,526 810,531 824,528 837,513 863,455 877,465 890,446 904,521 918,504 932,437 958,516 971,518 998,561 1012,546 1038,524 1052,534 1066,576 1079,567 1105,606 1118,604 1132,588 1146,599 1160,594 1173,606 1186,600 1200,639 1213,642 1227,663 1241,651 1254,624 1268,561 1281,570 1308,567 1321,534 1335,549 1348,551 1389,621 1403,630 1416,660 1430,636 1442,644 1455,630 1469,636 1520,588', 1.301)
    + seg(1980, 1440, '2,588 15,615 42,585 55,585 83,595 95,558 110,580 123,591 137,528 150,540 164,513 189,440 204,488 217,537 231,510 258,568 285,528 298,538 325,516 339,528 351,519 378,528 392,513 405,528 419,558 432,525 446,572 459,579 473,606 486,573 513,531 540,570 554,569 567,585 581,543 596,549 607,474 635,486 648,504 661,482 688,570 701,583 715,609 729,651 742,615 756,627 768,660 782,652 796,666 810,636 824,624 851,663 862,621 877,655 904,687 918,718 932,643 944,609 970,648 985,606 998,567 1012,564 1038,621 1052,591 1066,586 1079,591 1092,555 1105,603 1119,625 1132,628 1146,585 1160,575 1174,594 1188,600 1213,657 1227,597 1254,546 1270,543 1281,528 1294,474 1308,468 1321,456 1335,450 1361,407 1375,432 1389,483 1402,465 1430,390 1443,292 1456,324 1469,333 1482,351 1497,341', 1.301)
});

function add(parent, cls, html, style) {
  const el = document.createElement('div');
  el.className = cls;
  el.innerHTML = html;
  el.style.cssText = style || '';
  parent.appendChild(el);
}

const H = 815, W = 1709;
const prices = document.getElementById('prices');
const atY = y => 'top:' + (y / H * 100).toFixed(2) + '%;';
for (let i = 0; i <= 22; i++) if (i !== 19) add(prices, 'label', (13.26 - 0.51 * i).toFixed(2), atY(20 + i * 27.2));
[['0.60', 656], ['0.40', 685], ['0.20', 715], ['0.00', 744], ['-0.20', 773], ['-0.40', 803]].forEach(([t, y]) => add(prices, 'label', t, atY(y)));
[
  ['6.55', 379, 'rgba(190,36,32,.84)', ''],
  ['', 523, '#a0a4ac', 'dark'],
  ['3.83', 524, 'linear-gradient(#a0a4ac 4px,#a5cb9e 4px,#a5cb9e 12px,#b6a4e6 12px)', 'dark'],
  ['', 544, '#b04fb4', ''],
  ['3.35', 549, '#d9a033', 'dark'],
  ['3.57', 536, 'linear-gradient(#6d35e8 13px,#b04fb4 13px)', ''],
  ['2.87', 575, 'rgba(160,164,172,.94)', 'dark'],
  ['0.40', 684, 'rgba(34,90,42,.84)', ''],
  ['0.00', 743, 'rgba(132,24,28,.88)', ''],
  ['-0.05', 751, 'linear-gradient(#e9d3d4 8px,#d2d5da 8px)', 'dark']
].forEach(([t, y, bg, cls]) => add(prices, 'tag ' + cls, t, atY(y) + 'background:' + bg));

const times = document.getElementById('times');
const atX = x => 'left:' + (x / W * 100).toFixed(2) + '%;';
'10@4 18@39 Jun@92 09@127 17@162 Jul@220 12@255 20@290 Aug@343 10@378 18@413 Sep@471 10@506 20@541 Oct@594 11@629 19@664 Nov@717 09@752 17@787 Dec@839 09@874 17@909 2022@968 11@1003 20@1038 Feb@1085 09@1120 17@1155 Mar@1196 09@1231 17@1266 25@1301 Apr@1342 07@1377 13@1412 19@1447 25@1482 May@1517 13@1587 19@1622 25@1657 31@1692'.split(' ').forEach(item => {
  const [t, x] = item.split('@');
  add(times, 'label' + (/[A-Z]|2022/.test(t) ? ' month' : ''), t, atX(x));
});
add(times, 'date-tag', '5/8/2022', atX(1558));

const use = id => '<svg class="i-' + id.split('-')[0] + '"><use href="#' + id + '"/></svg>';
const legend = document.getElementById('legend');
['Volume', 'SMA', 'EMA', 'EMA', 'SMA', 'Bollinger Bands', 'EMA', 'SMA', 'Acorn Smart Money Divergence'].forEach((name, i) => {
  add(legend, 'study',
    '<button aria-label="Toggle">' + use(i === 8 ? 'eye-off' : 'eye') + '</button><button aria-label="Settings">' + use('cog') +
    '</button><button aria-label="Remove">' + use('cross') + '</button><span>' + name + '</span>');
});

const plot = document.getElementById('plot');
[372, 746].forEach(x => add(plot, 'event', '<svg><use href="#trend"/></svg>', atX(x)));
```
